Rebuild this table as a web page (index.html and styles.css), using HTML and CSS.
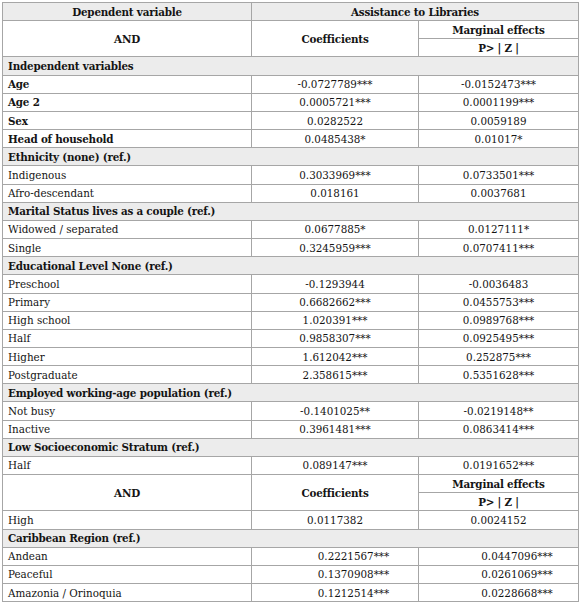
FILE: index.html
```html
<!DOCTYPE html>
<html lang="en">
<head>
<meta charset="utf-8">
<title>Assistance to Libraries</title>
<link rel="stylesheet" href="styles.css">
</head>
<body>
<table class="results">
  <colgroup>
    <col class="c-label">
    <col class="c-coef">
    <col class="c-marg">
  </colgroup>
  <thead>
    <tr class="shade">
      <th>Dependent variable</th>
      <th colspan="2">Assistance to Libraries</th>
    </tr>
    <tr>
      <th rowspan="2">AND</th>
      <th rowspan="2">Coefficients</th>
      <th>Marginal effects</th>
    </tr>
    <tr>
      <th>P&gt; | Z |</th>
    </tr>
  </thead>
  <tbody>
    <tr class="section"><td colspan="3">Independent variables</td></tr>
    <tr class="strong"><td>Age</td><td>-0.0727789***</td><td>-0.0152473***</td></tr>
    <tr class="strong"><td>Age 2</td><td>0.0005721***</td><td>0.0001199***</td></tr>
    <tr class="strong"><td>Sex</td><td>0.0282522</td><td>0.0059189</td></tr>
    <tr class="strong"><td>Head of household</td><td>0.0485438*</td><td>0.01017*</td></tr>
    <tr class="section"><td colspan="3">Ethnicity (none) (ref.)</td></tr>
    <tr><td>Indigenous</td><td>0.3033969***</td><td>0.0733501***</td></tr>
    <tr><td>Afro-descendant</td><td>0.018161</td><td>0.0037681</td></tr>
    <tr class="section"><td colspan="3">Marital Status lives as a couple (ref.)</td></tr>
    <tr><td>Widowed / separated</td><td>0.0677885*</td><td>0.0127111*</td></tr>
    <tr><td>Single</td><td>0.3245959***</td><td>0.0707411***</td></tr>
    <tr class="section"><td colspan="3">Educational Level None (ref.)</td></tr>
    <tr><td>Preschool</td><td>-0.1293944</td><td>-0.0036483</td></tr>
    <tr><td>Primary</td><td>0.6682662***</td><td>0.0455753***</td></tr>
    <tr><td>High school</td><td>1.020391***</td><td>0.0989768***</td></tr>
    <tr><td>Half</td><td>0.9858307***</td><td>0.0925495***</td></tr>
    <tr><td>Higher</td><td>1.612042***</td><td>0.252875***</td></tr>
    <tr><td>Postgraduate</td><td>2.358615***</td><td>0.5351628***</td></tr>
    <tr class="section"><td colspan="3">Employed working-age population (ref.)</td></tr>
    <tr><td>Not busy</td><td>-0.1401025**</td><td>-0.0219148**</td></tr>
    <tr><td>Inactive</td><td>0.3961481***</td><td>0.0863414***</td></tr>
    <tr class="section"><td colspan="3">Low Socioeconomic Stratum (ref.)</td></tr>
    <tr><td>Half</td><td>0.089147***</td><td>0.0191652***</td></tr>
    <tr class="subhead">
      <th rowspan="2">AND</th>
      <th rowspan="2">Coefficients</th>
      <th>Marginal effects</th>
    </tr>
    <tr class="subhead">
      <th>P&gt; | Z |</th>
    </tr>
    <tr><td>High</td><td>0.0117382</td><td>0.0024152</td></tr>
    <tr class="section"><td colspan="3">Caribbean Region (ref.)</td></tr>
    <tr class="indent"><td>Andean</td><td>0.2221567***</td><td>0.0447096***</td></tr>
    <tr class="indent"><td>Peaceful</td><td>0.1370908***</td><td>0.0261069***</td></tr>
    <tr class="indent"><td>Amazonia / Orinoquia</td><td>0.1212514***</td><td>0.0228668***</td></tr>
  </tbody>
</table>
</body>
</html>
```
FILE: styles.css
```css
html, body {
  margin: 0;
  padding: 0;
  background: #ffffff;
}

body {
  padding: 2px;
  font-family: "DejaVu Serif Condensed", "Liberation Serif", serif;
  font-size: 11.5px;
  color: #141414;
}

.results {
  border-collapse: collapse;
  table-layout: fixed;
  width: 576px;
}

.c-label { width: 249px; }
.c-coef { width: 167px; }
.c-marg { width: 160px; }

.results tr {
  height: 18.17px;
}

.results th,
.results td {
  border: 1px solid #a6a6a6;
  padding: 1px 5px 0;
  line-height: 15px;
  white-space: nowrap;
  vertical-align: middle;
}

.results th {
  font-weight: bold;
  text-align: center;
  letter-spacing: -0.2px;
}

.results td {
  text-align: center;
}

.results td:first-child {
  text-align: left;
}

.results .shade th {
  background: #ececec;
}

.results .section td {
  background: #ececec;
  font-weight: bold;
  text-align: left;
  letter-spacing: -0.2px;
}

.results .strong td:first-child {
  font-weight: bold;
  letter-spacing: -0.2px;
}

.results .indent td + td {
  padding-left: 42px;
}
```
